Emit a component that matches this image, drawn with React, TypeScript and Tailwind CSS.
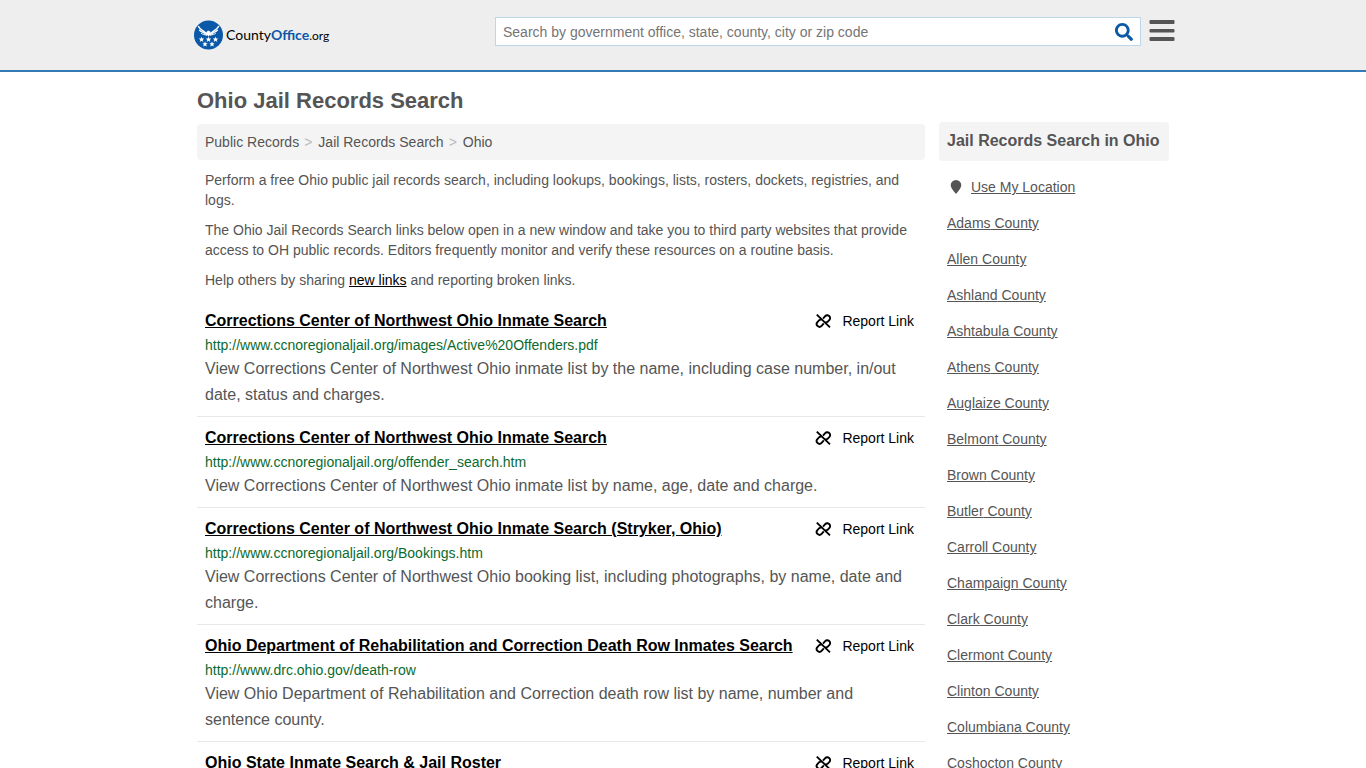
import React from 'react';
import { FaSearch } from 'react-icons/fa';

interface RecordLink {
  title: string;
  url: string;
  description: string;
}

const records: RecordLink[] = [
  {
    title: 'Corrections Center of Northwest Ohio Inmate Search',
    url: 'http://www.ccnoregionaljail.org/images/Active%20Offenders.pdf',
    description:
      'View Corrections Center of Northwest Ohio inmate list by the name, including case number, in/out date, status and charges.',
  },
  {
    title: 'Corrections Center of Northwest Ohio Inmate Search',
    url: 'http://www.ccnoregionaljail.org/offender_search.htm',
    description: 'View Corrections Center of Northwest Ohio inmate list by name, age, date and charge.',
  },
  {
    title: 'Corrections Center of Northwest Ohio Inmate Search (Stryker, Ohio)',
    url: 'http://www.ccnoregionaljail.org/Bookings.htm',
    description:
      'View Corrections Center of Northwest Ohio booking list, including photographs, by name, date and charge.',
  },
  {
    title: 'Ohio Department of Rehabilitation and Correction Death Row Inmates Search',
    url: 'http://www.drc.ohio.gov/death-row',
    description:
      'View Ohio Department of Rehabilitation and Correction death row list by name, number and sentence county.',
  },
  {
    title: 'Ohio State Inmate Search & Jail Roster',
    url: '',
    description: '',
  },
];

const counties = [
  'Adams',
  'Allen',
  'Ashland',
  'Ashtabula',
  'Athens',
  'Auglaize',
  'Belmont',
  'Brown',
  'Butler',
  'Carroll',
  'Champaign',
  'Clark',
  'Clermont',
  'Clinton',
  'Columbiana',
  'Coshocton',
];

const STAR = 'M0-2.8 0.8-0.9 2.7-0.9 1.2 0.4 1.8 2.4 0 1.2-1.8 2.4-1.2 0.4-2.7-0.9-0.8-0.9z';

const Logo: React.FC = () => (
  <a href="#" className="flex items-center gap-[2px] font-['Lato',sans-serif] text-sm leading-5 text-black">
    <svg viewBox="0 0 30 30" className="h-[30px] w-[30px]" aria-hidden="true">
      <circle cx="14.5" cy="15" r="14.5" fill="#0a58a8" />
      {/* wings */}
      <g fill="none" stroke="#fff" strokeLinecap="round">
        <path strokeWidth="1.6" d="M4.5 6.5C6 9.5 9 10.5 12.5 13.5" />
        <path strokeWidth="1.6" d="M24.5 6.5C23 9.5 20 10.5 16.5 13.5" />
        <path strokeWidth="1.2" d="M5.5 10.2C7.5 12 9.5 12.5 12.5 14.5" />
        <path strokeWidth="1.2" d="M23.5 10.2C21.5 12 19.5 12.5 16.5 14.5" />
        <path strokeWidth="1" d="M7.5 13.5C9 14.5 10.5 14.5 12.5 15.2" />
        <path strokeWidth="1" d="M21.5 13.5C20 14.5 18.5 14.5 16.5 15.2" />
      </g>
      <path fill="#fff" d="M12.5 12 14 10.6 16 11.2 16.8 13.5 14.5 16.8 12.2 13.5z" />
      <g fill="#fff">
        <path d={STAR} transform="translate(7.5 19.5)" />
        <path d={STAR} transform="translate(14.5 19.5)" />
        <path d={STAR} transform="translate(21.5 19.5)" />
        <path d={STAR} transform="translate(11 24.2)" />
        <path d={STAR} transform="translate(18 24.2)" />
      </g>
    </svg>
    <span>
      County<b className="text-[#0a58a8]">Office</b>
      <span className="text-xs">.org</span>
    </span>
  </a>
);

const BrokenLinkIcon: React.FC = () => (
  <svg
    viewBox="0 0 16 16"
    className="h-4 w-4"
    fill="none"
    stroke="currentColor"
    strokeWidth="1.9"
    aria-hidden="true"
  >
    <path d="M1.8 1.6 15 14.4" />
    <path d="M8 5.6 10.2 3.2A2.7 2.7 0 0 1 14.4 6.9L12.6 8.8Q11.6 9.6 10.2 9.2" />
    <path d="M8.8 10.4 6.6 12.8A2.7 2.7 0 0 1 2.4 9.1L4.2 7.2Q5.2 6.4 6.6 6.8" />
  </svg>
);

const App: React.FC = () => {
  return (
    <div className="h-screen overflow-hidden bg-white font-['Liberation_Sans',Arial,sans-serif] text-sm leading-5 text-[#555]">
      <header className="h-[72px] border-b-2 border-[#337ab7] bg-[#eee]">
        <div className="mx-auto flex max-w-[984px] items-start justify-between pt-[17px] pl-[3px]">
          <div className="pt-[3px]">
            <Logo />
          </div>
          <div className="flex items-start gap-2">
            <form className="flex h-[29px] w-[646px] border border-[#bcd6ea] bg-white">
              <input
                type="text"
                aria-label="Search"
                placeholder="Search by government office, state, county, city or zip code"
                className="min-w-0 flex-1 px-[7px] outline-none placeholder:text-[#757575]"
              />
              <button type="button" aria-label="Submit search" className="px-[7px] text-[#0a58a8]">
                <FaSearch className="h-[18px] w-[18px]" />
              </button>
            </form>
            <button type="button" aria-label="Menu" className="pt-[2px] text-[#555]">
              <svg viewBox="0 0 26 24" className="h-6 w-[26px]" fill="currentColor">
                <rect x="0.5" y="1" width="25" height="4" rx="1" />
                <rect x="0.5" y="10" width="25" height="3.4" rx="1" />
                <rect x="0.5" y="18" width="25" height="4" rx="1" />
              </svg>
            </button>
          </div>
        </div>
      </header>

      <div className="mx-auto max-w-[972px]">
        <h1 className="pt-4 pb-[6px] text-[22px] leading-[26px] font-bold">Ohio Jail Records Search</h1>
        <div className="flex items-start gap-[14px]">
          <main className="min-w-0 flex-1 pt-1">
            <nav aria-label="Breadcrumb" className="rounded bg-[#f4f4f4] p-2">
              <ol className="flex">
                <li>
                  <a href="#">Public Records</a>
                </li>
                <li className="pr-[6px] pl-[5px] text-[#bbb]">&gt;</li>
                <li>
                  <a href="#">Jail Records Search</a>
                </li>
                <li className="pr-[6px] pl-[5px] text-[#bbb]">&gt;</li>
                <li>
                  <a href="#">Ohio</a>
                </li>
              </ol>
            </nav>

            <div className="space-y-[10px] px-2 py-[10px]">
              <p>
                Perform a free Ohio public jail records search, including lookups, bookings, lists, rosters, dockets,
                registries, and logs.
              </p>
              <p>
                The Ohio Jail Records Search links below open in a new window and take you to third party websites that
                provide access to OH public records. Editors frequently monitor and verify these resources on a routine
                basis.
              </p>
              <p>
                Help others by sharing{' '}
                <a href="#" className="text-black underline">
                  new links
                </a>{' '}
                and reporting broken links.
              </p>
            </div>

            <ul>
              {records.map((record, i) => (
                <li key={i} className="border-b border-[#e8e8e8] p-2">
                  <div className="flex items-center justify-between text-black">
                    <a href="#" className="text-base leading-[26px] font-bold underline">
                      {record.title}
                    </a>
                    <a href="#" className="flex items-center gap-[11px] pr-[3px]">
                      <BrokenLinkIcon />
                      Report Link
                    </a>
                  </div>
                  <p className="leading-[22px] text-[#0b6b2e]">{record.url}</p>
                  <p className="text-base leading-[26px]">{record.description}</p>
                </li>
              ))}
            </ul>
          </main>

          <aside className="w-[230px] pt-[2px]">
            <h2 className="rounded bg-[#f4f4f4] px-2 pt-[6px] pb-2 text-base leading-[25px] font-bold">
              Jail Records Search in Ohio
            </h2>
            <ul className="px-2 pt-2 leading-9">
              <li className="flex items-center">
                <svg viewBox="0 0 18 18" className="mr-[6px] h-[18px] w-[18px]" fill="currentColor" aria-hidden="true">
                  <path d="M9 2a5.3 5.3 0 0 1 5.3 5.3c0 2.7-2.8 5.7-5.3 8.7-2.5-3-5.3-6-5.3-8.700a5.300 5.300 0 0 1 5.300-5.300z" />
                </svg>
                <a href="#" className="underline">
                  Use My Location
                </a>
              </li>
              {counties.map((county) => (
                <li key={county}>
                  <a href="#" className="underline">
                    {county} County
                  </a>
                </li>
              ))}
            </ul>
          </aside>
        </div>
      </div>
    </div>
  );
};

export default App;
